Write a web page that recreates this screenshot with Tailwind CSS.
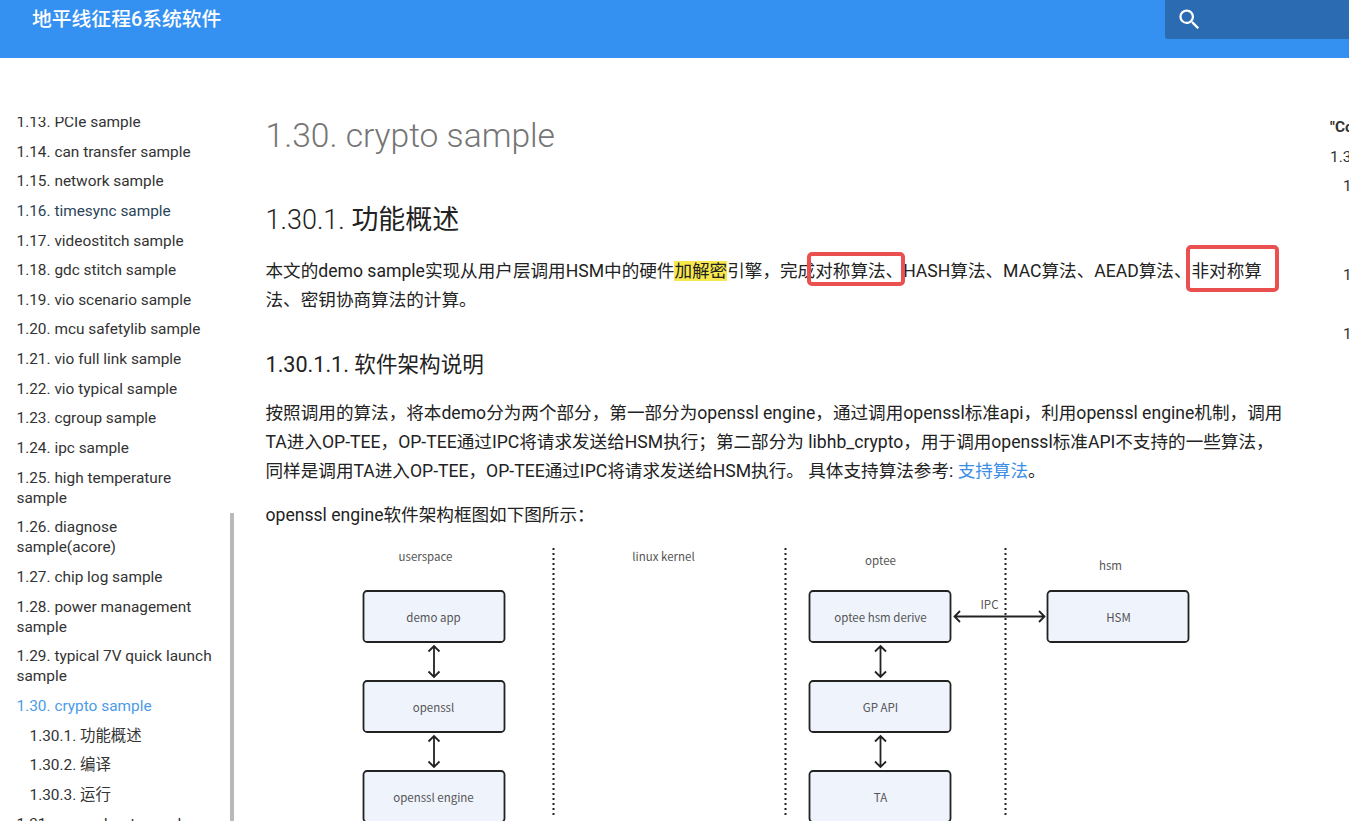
<!DOCTYPE html>
<html lang="zh">
<head>
  <meta charset="UTF-8" />
  <title>1.30. crypto sample</title>
  <script src="https://cdn.jsdelivr.net/npm/@tailwindcss/browser@4"></script>
</head>
<body class="h-[821px] overflow-hidden bg-white font-['Roboto','Noto_Sans_CJK_SC',sans-serif] text-[#222]">

  <!-- header -->
  <header class="flex h-[58px] items-start justify-between bg-[#3591f1]">
    <div class="ml-8 mt-[7px] text-[19.8px] leading-[26px] font-medium text-white">地平线征程6系统软件</div>
    <div class="flex h-[39px] w-[184px] items-center rounded-bl-[3px] bg-[#2a6bb2] pl-[10.5px]">
      <svg class="h-[27px] w-[27px]" viewBox="0 0 24 24" fill="#fff"><path d="M9.5,3A6.5,6.5 0 0,1 16,9.5C16,11.11 15.41,12.59 14.44,13.73L14.71,14H15.5L20.5,19L19,20.5L14,15.5V14.71L13.73,14.44C12.59,15.41 11.11,16 9.5,16A6.5,6.5 0 0,1 3,9.5A6.5,6.5 0 0,1 9.5,3M9.5,5C7,5 5,7 5,9.5C5,12 7,14 9.5,14C12,14 14,12 14,9.5C14,7 12,5 9.5,5Z"/></svg>
    </div>
  </header>

  <div class="flex h-[763px]">
    <!-- left nav -->
    <aside class="relative mt-[59px] w-[234px] shrink-0 overflow-hidden">
      <ul class="-mt-[5px] flex w-[214px] flex-col gap-[9.65px] pl-[16.5px] text-[15.4px] leading-[20px] text-[#333]">
        <li>1.13. PCIe sample</li>
        <li>1.14. can transfer sample</li>
        <li>1.15. network sample</li>
        <li class="text-[#2a4557]">1.16. timesync sample</li>
        <li>1.17. videostitch sample</li>
        <li>1.18. gdc stitch sample</li>
        <li>1.19. vio scenario sample</li>
        <li>1.20. mcu safetylib sample</li>
        <li>1.21. vio full link sample</li>
        <li>1.22. vio typical sample</li>
        <li>1.23. cgroup sample</li>
        <li>1.24. ipc sample</li>
        <li>1.25. high temperature sample</li>
        <li>1.26. diagnose sample(acore)</li>
        <li>1.27. chip log sample</li>
        <li>1.28. power management sample</li>
        <li>1.29. typical 7V quick launch sample</li>
        <li class="text-[#4c9be8]">1.30. crypto sample</li>
        <li class="pl-[13px]">1.30.1. 功能概述</li>
        <li class="pl-[13px]">1.30.2. 编译</li>
        <li class="pl-[13px]">1.30.3. 运行</li>
        <li>1.31. secure boot sample</li>
      </ul>
      <div class="absolute right-0 top-[396px] h-[400px] w-1 bg-[#b9b9b9]"></div>
    </aside>

    <!-- article -->
    <main class="relative ml-[31.5px] w-[1018px] shrink-0 text-[17.6px] leading-[29px]">
      <h1 class="mt-[56px] text-[33.6px] leading-[44px] font-light text-[#757575]">1.30. crypto sample</h1>
      <h2 class="mt-[44px] text-[27px] leading-[36px] font-light">1.30.1. <span class="font-normal">功能概述</span></h2>
      <p class="mt-[19px]">本文的demo sample实现从用户层调用HSM中的硬件<mark class="bg-[#f7e84e] text-[#222]">加解密</mark>引擎，完成对称算法、HASH算法、MAC算法、AEAD算法、非对称算法、密钥协商算法的计算。</p>
      <h3 class="mt-[32px] text-[21.6px] leading-[36px]">1.30.1.1. 软件架构说明</h3>
      <p class="mt-[16px]">按照调用的算法，将本demo分为两个部分，第一部分为openssl engine，通过调用openssl标准api，利用openssl engine机制，调用TA进入OP-TEE，OP-TEE通过IPC将请求发送给HSM执行；第二部分为 libhb_crypto，用于调用openssl标准API不支持的一些算法，同样是调用TA进入OP-TEE，OP-TEE通过IPC将请求发送给HSM执行。 具体支持算法参考: <a class="text-[#3a8ee6]" href="#">支持算法</a>。</p>
      <p class="mt-[15px]">openssl engine软件架构框图如下图所示：</p>

      <!-- diagram -->
      <svg class="mt-[15px] block" width="1018" height="276" viewBox="265.500 545 1018 276" font-family="'Noto Sans CJK SC','Noto Sans',sans-serif" font-size="11.5" fill="#555" text-anchor="middle">
        <g stroke="#222" stroke-width="2" stroke-dasharray="2 3">
          <line x1="553" y1="548" x2="553" y2="818"/>
          <line x1="785" y1="548" x2="785" y2="818"/>
          <line x1="1005" y1="548" x2="1005" y2="818"/>
        </g>
        <text x="425" y="561">userspace</text>
        <text x="663" y="561">linux kernel</text>
        <text x="880" y="565">optee</text>
        <text x="1110" y="570">hsm</text>
        <text x="989" y="609">IPC</text>
        <g fill="#eff3fc" stroke="#222" stroke-width="1.8">
          <rect x="363" y="591" width="141" height="51" rx="3.5"/>
          <rect x="363" y="681" width="141" height="51" rx="3.5"/>
          <rect x="363" y="771" width="141" height="51" rx="3.5"/>
          <rect x="809" y="591" width="141" height="51" rx="3.5"/>
          <rect x="809" y="681" width="141" height="51" rx="3.5"/>
          <rect x="809" y="771" width="141" height="51" rx="3.5"/>
          <rect x="1047" y="591" width="141" height="51" rx="3.5"/>
        </g>
        <text x="433" y="622">demo app</text>
        <text x="433" y="712">openssl</text>
        <text x="433" y="802">openssl engine</text>
        <text x="880" y="622">optee hsm derive</text>
        <text x="880" y="712">GP API</text>
        <text x="880" y="802">TA</text>
        <text x="1118" y="622">HSM</text>
        <g fill="none" stroke="#222" stroke-width="1.8">
          <path d="M433.500 646V677M428 651.500L433.500 646L439 651.500M428 671.500L433.500 677L439 671.500"/>
          <path d="M433.500 736V767M428 741.500L433.500 736L439 741.500M428 761.500L433.500 767L439 761.500"/>
          <path d="M880 646V677M874.500 651.500L880 646L885.500 651.500M874.500 671.500L880 677L885.500 671.500"/>
          <path d="M880 736V767M874.500 741.500L880 736L885.500 741.500M874.500 761.500L880 767L885.500 761.500"/>
          <path d="M954 616.500H1044M959.500 611L954 616.500L959.500 622M1038.500 611L1044 616.500L1038.500 622"/>
        </g>
      </svg>

      <!-- red annotation boxes -->
      <div class="absolute left-[541.5px] top-[194px] h-[34px] w-[98px] rounded-[5px] border-4 border-[#e9504f]"></div>
      <div class="absolute left-[920.5px] top-[187px] h-[47px] w-[93px] rounded-[5px] border-4 border-[#e9504f]"></div>
    </main>

    <!-- right toc -->
    <nav class="ml-[46.5px] mt-[59px] flex w-[200px] shrink-0 flex-col gap-[9.6px] text-[15.4px] leading-[20px] text-[#333]">
      <div class="font-bold">"Contents"</div>
      <div>1.30. crypto sample</div>
      <div class="pl-[13px]">1.30.1. 功能概述</div>
      <div class="pl-[26px]">1.30.1.1. 软件架构说明</div>
      <div class="pl-[26px]">1.30.1.2. 支持算法</div>
      <div class="pl-[13px]">1.30.2. 编译</div>
      <div class="pl-[26px]">1.30.2.1. 说明</div>
      <div class="pl-[13px]">1.30.3. 运行</div>
    </nav>
  </div>
</body>
</html>
